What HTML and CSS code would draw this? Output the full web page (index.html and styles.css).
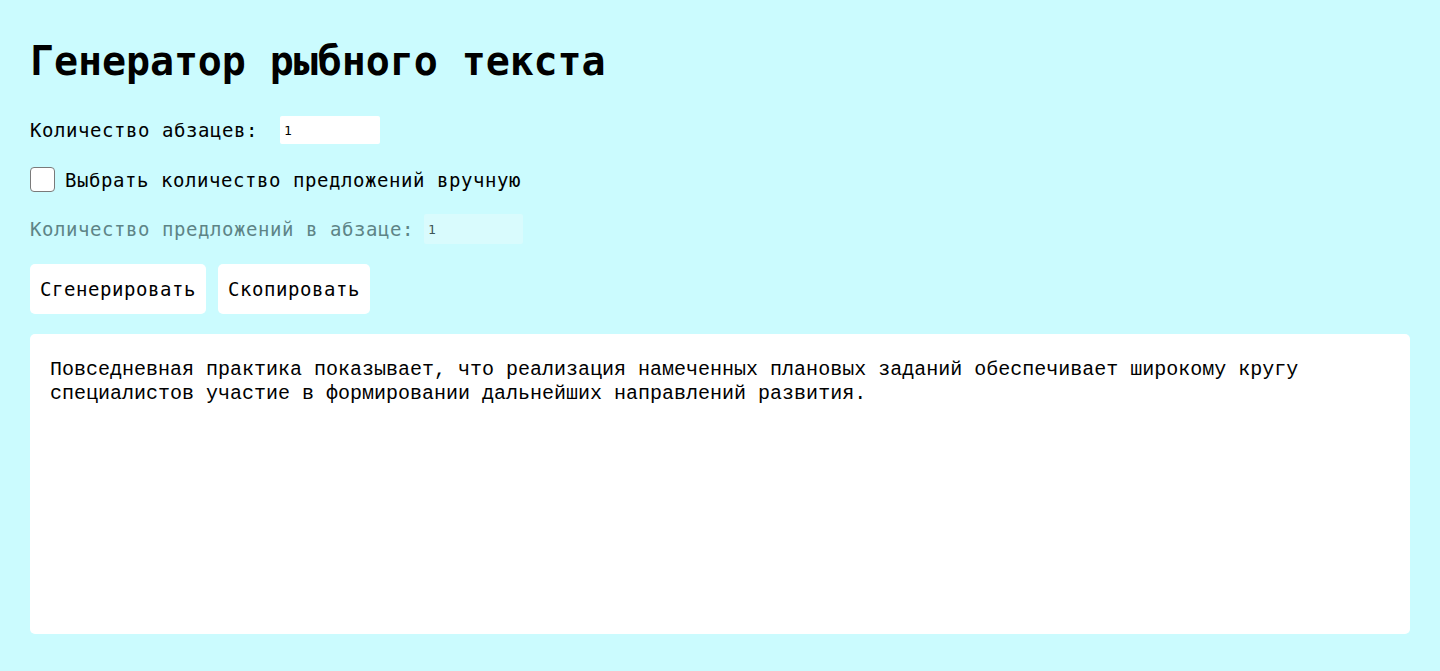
FILE: index.html
```html
<!DOCTYPE html>
<html lang="ru">
<head>
<meta charset="utf-8">
<title>Генератор рыбного текста</title>
<link rel="stylesheet" href="styles.css">
</head>
<body>
<main class="page">
  <h1 class="title">Генератор рыбного текста</h1>
  <div class="field field--paragraphs">
    <label class="field__label" for="paragraphs">Количество абзацев:&nbsp;</label>
    <input class="field__input" id="paragraphs" type="text" value="1">
  </div>
  <label class="check">
    <input class="check__box" type="checkbox">
    <span class="check__text">Выбрать количество предложений вручную</span>
  </label>
  <div class="field field--sentences field--disabled">
    <label class="field__label" for="sentences">Количество предложений в абзаце:</label>
    <input class="field__input" id="sentences" type="text" value="1" disabled>
  </div>
  <div class="actions">
    <button class="btn" type="button">Сгенерировать</button>
    <button class="btn" type="button">Скопировать</button>
  </div>
  <textarea class="output" readonly>Повседневная практика показывает, что реализация намеченных плановых заданий обеспечивает широкому кругу специалистов участие в формировании дальнейших направлений развития.</textarea>
</main>
</body>
</html>
```
FILE: styles.css
```css
* {
  box-sizing: border-box;
}

html, body {
  margin: 0;
  height: 100%;
}

body {
  background: #cbfbfe;
  color: #000;
  font-family: "DejaVu Sans Mono", "Liberation Mono", monospace;
}

.page {
  display: flex;
  flex-direction: column;
  align-items: flex-start;
  padding: 37px 30px 30px;
}

.title {
  margin: 0;
  font-size: 40px;
  line-height: 48px;
  font-weight: 700;
  letter-spacing: -0.1px;
}

.field {
  display: flex;
  align-items: center;
  gap: 10px;
  font-size: 19px;
  letter-spacing: 0.56px;
}

.field--paragraphs {
  margin-top: 31px;
  height: 28px;
}

.field--sentences {
  margin-top: 22px;
  height: 30px;
}

.field__input {
  appearance: none;
  border: none;
  outline: none;
  width: 100px;
  height: 28px;
  padding: 0 4px;
  background: #fff;
  border-radius: 2px;
  font-family: "DejaVu Sans Mono", monospace;
  font-size: 13px;
  color: #000;
  letter-spacing: 0;
}

.field--disabled .field__label {
  color: #5e8486;
}

.field--disabled .field__input {
  width: 99px;
  height: 30px;
  background: #d9fbfd;
  color: #3f5557;
}

.check {
  display: flex;
  align-items: center;
  gap: 10px;
  margin-top: 23px;
  height: 25px;
  font-size: 19px;
  letter-spacing: 0.56px;
}

.check__box {
  appearance: none;
  margin: 0;
  width: 25px;
  height: 25px;
  background: #fff;
  border: 1px solid #7a7a7a;
  border-radius: 4px;
}

.actions {
  display: flex;
  gap: 12px;
  margin-top: 20px;
}

.btn {
  appearance: none;
  border: none;
  height: 50px;
  padding: 0 10px;
  background: #fff;
  border-radius: 5px;
  font-family: "DejaVu Sans Mono", monospace;
  font-size: 19px;
  letter-spacing: 0.56px;
  color: #000;
}

.output {
  display: block;
  margin-top: 20px;
  width: 100%;
  height: 300px;
  padding: 24px 20px;
  border: none;
  outline: none;
  border-radius: 5px;
  background: #fff;
  resize: none;
  overflow: hidden;
  font-family: "Liberation Mono", monospace;
  font-size: 20px;
  line-height: 24px;
  color: #000;
}
```
